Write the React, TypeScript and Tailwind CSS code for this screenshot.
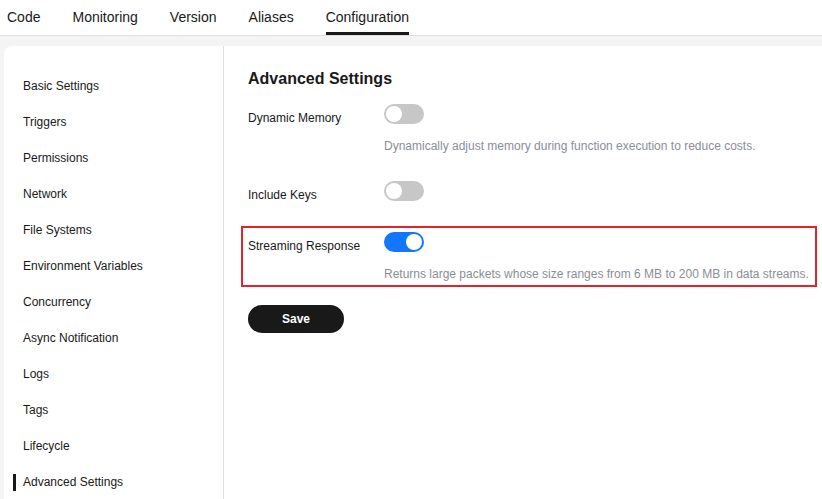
import React from 'react';

const tabs = ['Code', 'Monitoring', 'Version', 'Aliases', 'Configuration'];

const menu = [
  'Basic Settings',
  'Triggers',
  'Permissions',
  'Network',
  'File Systems',
  'Environment Variables',
  'Concurrency',
  'Async Notification',
  'Logs',
  'Tags',
  'Lifecycle',
  'Advanced Settings',
];

const Toggle = ({ on }: { on: boolean }) => (
  <div
    className={`relative w-[40px] h-[20px] rounded-full shrink-0 ${on ? 'bg-[#1476ff]' : 'bg-[#c7c7c7]'}`}
  >
    <div
      className={`absolute top-[2px] w-[16px] h-[16px] rounded-full bg-white ${on ? 'left-[22px]' : 'left-[2px]'}`}
    />
  </div>
);

const Setting = ({ label, on, desc }: { label: string; on: boolean; desc?: string }) => (
  <div className="flex items-start">
    <div className="w-[136px] shrink-0 pt-[5px] text-[12px] leading-[18px] text-[#191919]">{label}</div>
    <div>
      <Toggle on={on} />
      {desc && <p className="mt-[13px] text-[12px] leading-[18px] text-[#8a8e99] whitespace-nowrap">{desc}</p>}
    </div>
  </div>
);

const App = () => {
  return (
    <div className="w-full h-[499px] overflow-hidden flex flex-col bg-white font-['Liberation_Sans',Arial,sans-serif]">
      {/* Tabs */}
      <div className="h-[36px] shrink-0 border-b border-[#dcdfe6] flex gap-[32px] pl-[7px]">
        {tabs.map((t) => (
          <div key={t} className="relative h-full flex items-center text-[14px] text-[#191919]">
            <span className="-mt-[1px]">{t}</span>
            {t === 'Configuration' && (
              <div className="absolute left-0 right-0 bottom-0 h-[3px] bg-[#191919]" />
            )}
          </div>
        ))}
      </div>

      <div className="flex-1 bg-[#f4f4f4] pt-[10px] pl-[4px] flex">
        <div className="flex-1 bg-white rounded-tl-[8px] flex">
          {/* Sidebar */}
          <div className="w-[220px] shrink-0 border-r border-[#dfdfdf] pt-[22px]">
            {menu.map((m) => (
              <div key={m} className="relative h-[36px] flex items-center pl-[19px] text-[12px] text-[#191919]">
                {m === 'Advanced Settings' && (
                  <div className="absolute left-[9px] top-[10px] w-[3px] h-[17px] bg-[#191919]" />
                )}
                {m}
              </div>
            ))}
          </div>

          {/* Content */}
          <div className="flex-1 pl-[24px] pt-[21px]">
            <h2 className="text-[16px] leading-[24px] font-bold text-[#191919]">Advanced Settings</h2>
            <div className="mt-[13px]">
              <Setting
                label="Dynamic Memory"
                on={false}
                desc="Dynamically adjust memory during function execution to reduce costs."
              />
            </div>
            <div className="mt-[26px]">
              <Setting label="Include Keys" on={false} />
            </div>
            <div className="mt-[22px] -ml-[7px] w-[576px] border-2 border-[#e3242b] pl-[5px] pt-[4px] pb-[2px]">
              <Setting
                label="Streaming Response"
                on={true}
                desc="Returns large packets whose size ranges from 6 MB to 200 MB in data streams."
              />
            </div>
            <button className="mt-[18px] w-[96px] h-[28px] rounded-full bg-[#191919] text-white text-[12px] font-bold">
              Save
            </button>
          </div>
        </div>
      </div>
    </div>
  );
};

export default App;
